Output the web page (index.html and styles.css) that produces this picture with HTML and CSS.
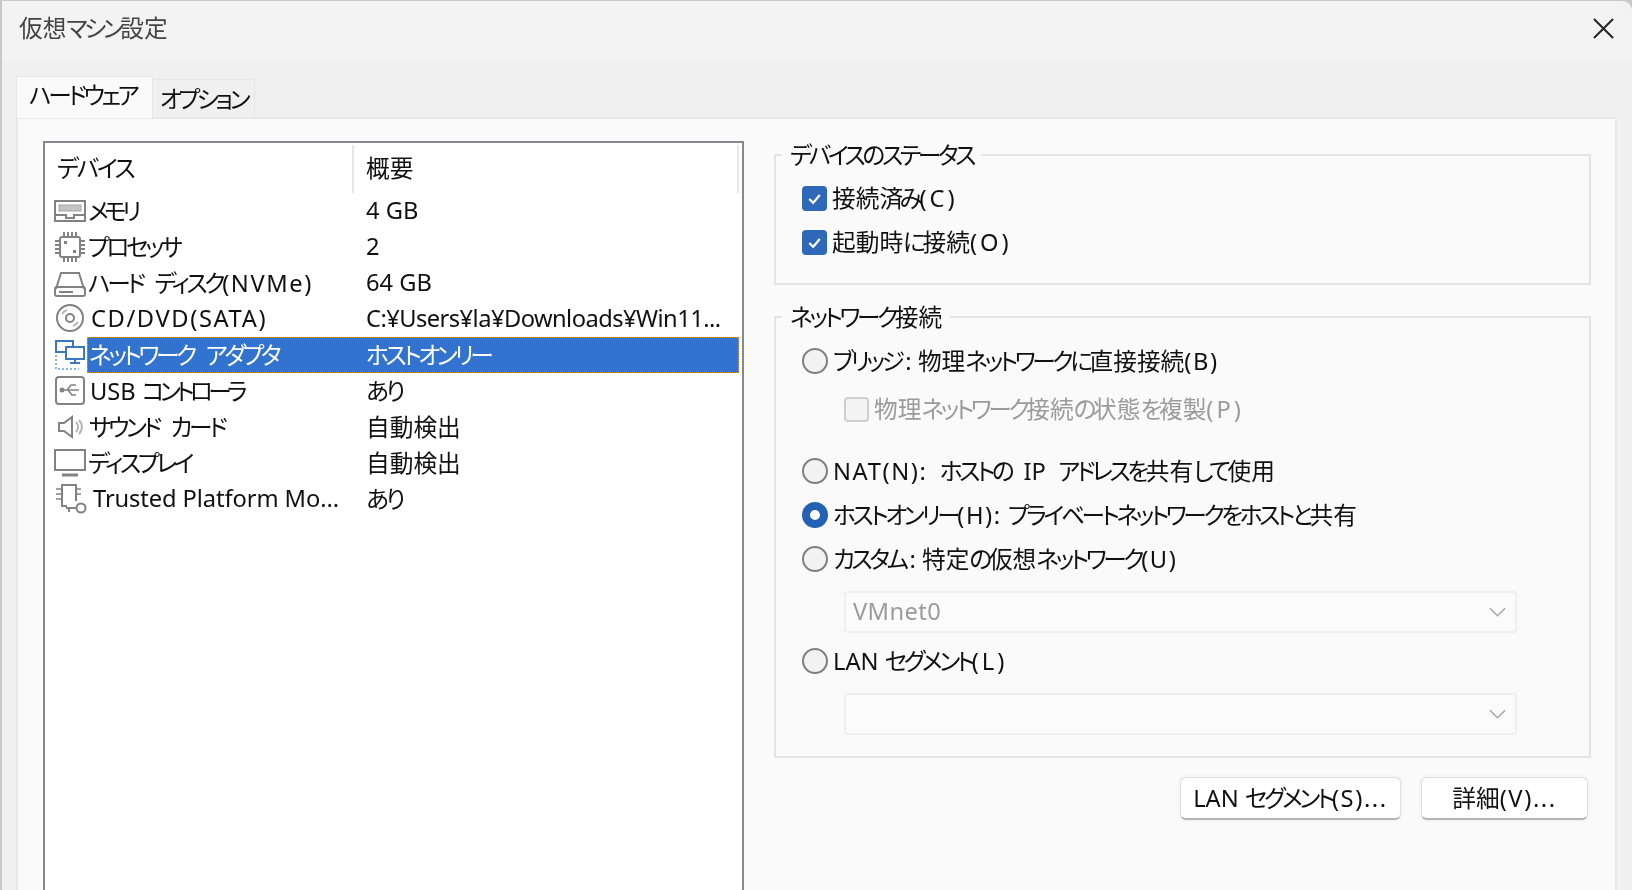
FILE: index.html
```html
<!DOCTYPE html>
<html lang="ja">
<head>
<meta charset="utf-8">
<title>仮想マシン設定</title>
<link rel="stylesheet" href="styles.css">
</head>
<body>
<div class="dialog">
  <header class="titlebar">
    <span class="title">仮想<span class="k">マシン</span>設定</span>
    <svg class="close" viewBox="0 0 22 22"><path d="M1 1L21 21M21 1L1 21"/></svg>
  </header>
  <nav class="tabs">
    <div class="tab active"><span class="k">ハードウェア</span></div>
    <div class="tab"><span class="k">オプション</span></div>
  </nav>
  <main class="panel">
    <section class="list">
      <div class="list-head">
        <div class="head-name"><span class="k2">デバイス</span></div>
        <div class="head-val">概要</div>
      </div>
      <div class="row">
        <svg class="icon" viewBox="0 0 34 34"><rect x="2" y="7" width="30" height="20" fill="none"/><rect class="soft" x="6" y="11" width="22" height="6"/><path d="M2 21H13V24H21V21H32"/></svg>
        <div class="cells"><span class="name tight"><span class="k4">メモリ</span></span><span class="val">4 GB</span></div>
      </div>
      <div class="row">
        <svg class="icon" viewBox="0 0 34 34"><rect x="7" y="7" width="20" height="20" rx="2"/><path d="M11 2V6M15 2V6M19 2V6M23 2V6M11 28V32M15 28V32M19 28V32M23 28V32M2 11H6M2 15H6M2 19H6M2 23H6M28 11H32M28 15H32M28 19H32M28 23H32"/><rect class="dot" x="11" y="11" width="3" height="3"/><rect class="dot" x="20" y="20" width="3" height="3"/></svg>
        <div class="cells"><span class="name tight"><span class="k">プロセッサ</span></span><span class="val">2</span></div>
      </div>
      <div class="row">
        <svg class="icon" viewBox="0 0 34 34"><path d="M3 23L8 7H26L31 23"/><rect x="2" y="21" width="30" height="9" rx="2"/><path d="M6 26H20"/></svg>
        <div class="cells"><span class="name tight"><span class="k">ハード ディスク</span><span class="m">(NVMe)</span></span><span class="val">64 GB</span></div>
      </div>
      <div class="row">
        <svg class="icon" viewBox="0 0 34 34"><circle cx="17" cy="16" r="13"/><circle cx="17" cy="16" r="4"/><path class="soft-line" d="M9 12A9 9 0 0 1 14 8M25 20A9 9 0 0 1 20 24"/></svg>
        <div class="cells cd"><span class="name"><span class="m">CD/DVD(SATA)</span></span><span class="val path">C:¥Users¥la¥Downloads¥Win11...</span></div>
      </div>
      <div class="row">
        <svg class="icon net" viewBox="0 0 34 34"><rect x="3" y="3" width="17" height="11"/><rect class="fill" x="13" y="9" width="18" height="12"/><path d="M22 21V25M17 25H27"/><path class="dots" d="M3 17V31H26"/></svg>
        <div class="cells selected"><span class="name"><span class="k">ネットワーク アダプタ</span></span><span class="val"><span class="k">ホストオンリー</span></span></div>
      </div>
      <div class="row">
        <svg class="icon" viewBox="0 0 34 34"><rect x="3" y="3" width="28" height="27" rx="3"/><path class="thin" d="M9 16H26M14 16L18 11H23M15 16L19 21H23"/><circle class="dot" cx="9" cy="16" r="2.5"/></svg>
        <div class="cells"><span class="name usb">USB <span class="k4">コントローラ</span></span><span class="val"><span class="k">あり</span></span></div>
      </div>
      <div class="row">
        <svg class="icon" viewBox="0 0 34 34"><path d="M6 13H11L19 7V27L11 21H6Z"/><path class="soft-line" d="M23 12A7 7 0 0 1 23 22M26 10A10 10 0 0 1 26 24"/></svg>
        <div class="cells"><span class="name"><span class="k">サウンド カード</span></span><span class="val">自動検出</span></div>
      </div>
      <div class="row">
        <svg class="icon" viewBox="0 0 34 34"><rect x="2" y="4" width="30" height="20"/><path d="M9 29H25" stroke-width="3"/></svg>
        <div class="cells"><span class="name tight"><span class="k">ディスプレイ</span></span><span class="val">自動検出</span></div>
      </div>
      <div class="row">
        <svg class="icon" viewBox="0 0 34 34"><path d="M23 19V3H9V24H14"/><path class="thin" d="M3 7H8M3 12H8M3 17H8M24 7H28M24 12H28"/><circle cx="28" cy="26" r="4.5"/><path d="M13 26H23M16 26V30"/></svg>
        <div class="cells tpm"><span class="name">Trusted Platform Mo...</span><span class="val"><span class="k">あり</span></span></div>
      </div>
    </section>

    <section class="side">
      <fieldset class="group status">
        <legend><span class="k">デバイスのステータス</span></legend>
        <label class="opt"><span class="check on"><svg viewBox="0 0 24 24"><path d="M6 12.5L10.5 17L18 8"/></svg></span><span class="t">接続<span class="k">済み</span><span class="mw">(C)</span></span></label>
        <label class="opt"><span class="check on"><svg viewBox="0 0 24 24"><path d="M6 12.5L10.5 17L18 8"/></svg></span><span class="t">起動時<span class="k">に</span>接続<span class="mw">(O)</span></span></label>
      </fieldset>

      <fieldset class="group network">
        <legend><span class="k">ネットワーク</span>接続</legend>
        <label class="opt"><span class="radio"></span><span class="t"><span class="k">ブリッジ</span><span class="co">:</span> 物理<span class="k">ネットワークに</span>直接接続<span class="m">(B)</span></span></label>
        <label class="opt sub disabled"><span class="check"></span><span class="t">物理<span class="k">ネットワーク</span>接続<span class="k">の</span>状態<span class="k">を</span>複製<span class="mw">(P)</span></span></label>
        <label class="opt nat"><span class="radio"></span><span class="t"><span class="m">NAT(N):</span> <span class="k">ホストの</span> IP <span class="k">アドレスを</span>共有<span class="k">して</span>使用</span></label>
        <label class="opt"><span class="radio on"></span><span class="t"><span class="k">ホストオンリー</span><span class="m">(H):</span> <span class="k">プライベートネットワークをホストと</span>共有</span></label>
        <label class="opt"><span class="radio"></span><span class="t"><span class="k">カスタム</span><span class="co">:</span> 特定<span class="k">の</span>仮想<span class="k">ネットワーク</span><span class="m">(U)</span></span></label>
        <div class="combo first"><span class="cv">VMnet0</span><svg viewBox="0 0 18 10"><path d="M1 1L9 9L17 1"/></svg></div>
        <label class="opt lan"><span class="radio"></span><span class="t">LAN <span class="k">セグメント</span><span class="mw">(L)</span></span></label>
        <div class="combo second"><span></span><svg viewBox="0 0 18 10"><path d="M1 1L9 9L17 1"/></svg></div>
      </fieldset>

      <div class="actions">
        <button class="btn seg"><span class="t">LAN <span class="k">セグメント</span><span class="m">(S)...</span></span></button>
        <button class="btn adv"><span class="t">詳細<span class="m">(V)...</span></span></button>
      </div>
    </section>
  </main>
</div>
</body>
</html>
```
FILE: styles.css
```css
* { box-sizing: border-box; }
html, body { margin: 0; height: 100%; overflow: hidden; }
body {
  background: #c9c9c9;
  font-family: "Noto Sans", "Noto Sans CJK JP", sans-serif;
  font-size: 23.7px;
  font-feature-settings: "palt";
  color: #111;
}
.k { letter-spacing: -3.4px; word-spacing: 9px; }
.k2 { letter-spacing: -2.4px; }
.k4 { letter-spacing: -4.6px; }
.m { letter-spacing: 1.6px; }
.mw { letter-spacing: 3px; }
.co { margin-left: 4px; }
.path { letter-spacing: -0.55px; }
.t { display: inline-block; margin-top: -3px; white-space: nowrap; }
.dialog {
  height: 889px;
  margin: 1px 0 0 2px;
  background: #f0f0f0;
  border-top-right-radius: 10px;
  display: flex;
  flex-direction: column;
  overflow: hidden;
  filter: blur(0.35px);
}
.titlebar {
  height: 60px;
  flex: none;
  background: #f3f3f3;
  display: flex;
  align-items: center;
  justify-content: space-between;
  padding: 0 18px 4px 17px;
}
.title { color: #444; line-height: 1; }
.close { width: 21px; height: 21px; fill: none; stroke: #222; stroke-width: 2; margin-top: -1px; }
.tabs { height: 56px; flex: none; display: flex; align-items: flex-end; padding-left: 14px; }
.tab {
  height: 38px;
  width: 102px;
  padding-left: 7px;
  line-height: 38px;
  white-space: nowrap;
  background: #f0f0f0;
  border: 1px solid #e6e6e6;
  border-bottom: 0;
  border-left: 0;
}
.tab.active {
  height: 42px;
  width: 137px;
  padding-left: 12px;
  background: #fafafa;
  border-left: 1px solid #e6e6e6;
  line-height: 36px;
  position: relative;
  margin-bottom: -1px;
  z-index: 1;
}
.panel {
  flex: 1;
  min-height: 0;
  margin: 0 15px 0 14px;
  background: #fafafa;
  border: 2px solid #e8e8e8;
  border-bottom: 0;
  padding: 22px 0 0 25px;
  display: flex;
  gap: 30px;
}
.list {
  flex: none;
  width: 701px;
  background: #fff;
  border: 2px solid #868a90;
  border-bottom: 0;
}
.list-head { height: 50px; display: flex; align-items: center; padding: 2px 3px 0 0; }
.head-name { width: 309px; height: 100%; padding-left: 12px; line-height: 46px; border-right: 2px solid #e8e8e8; }
.head-val { flex: 1; height: 100%; padding-left: 12px; line-height: 46px; border-right: 2px solid #e8e8e8; }
.row { height: 36px; display: flex; align-items: center; }
.icon {
  flex: none;
  width: 34px;
  height: 34px;
  margin-left: 8px;
  fill: none;
  stroke: #828282;
  stroke-width: 2;
}
.icon .soft { fill: #c4c4c4; stroke: #a5a5a5; stroke-width: 1; }
.icon .dot { fill: #828282; stroke: none; }
.icon .soft-line { stroke: #b5b5b5; }
.icon .thin { stroke-width: 1.5; }
.icon.net { stroke: #3a78c0; }
.net .fill { fill: #fff; }
.net .dots { stroke: #8db4e0; stroke-dasharray: 2 2; }
.cells {
  flex: 1;
  height: 36px;
  margin-right: 3px;
  padding-bottom: 2px;
  display: flex;
  align-items: center;
  border: 1px solid transparent;
  white-space: nowrap;
}
.name { width: 278px; padding-left: 1px; flex: none; }
.tight { padding-left: 0; }
.val { flex: 1; }
.cd .name { padding-left: 3px; }
.usb { padding-left: 2px; }
.tpm .name { padding-left: 5px; letter-spacing: -0.1px; }
.selected { background: #3273cf; color: #fff; border: 1px dotted #e39a3c; }

.side { flex: none; width: 817px; }
.group {
  margin: 0;
  padding: 0;
  min-width: 0;
  border: 2px solid #e4e4e4;
}
.group legend {
  margin-left: 6px;
  padding: 0 8px;
  line-height: 28px;
  height: 28px;
}
.status { height: 144px; padding-top: 7px; margin-bottom: 18px; }
.network { height: 455px; padding-top: 8px; }
.opt {
  height: 44px;
  display: flex;
  align-items: center;
  gap: 5px;
  padding-left: 26px;
  white-space: nowrap;
}
.check {
  flex: none;
  width: 25px;
  height: 25px;
  border-radius: 4px;
  background: #f4f4f4;
  border: 2px solid #cfcfcf;
}
.check.on { background: #2d68b9; border-color: #2d68b9; }
.check svg { display: block; width: 21px; height: 21px; fill: none; stroke: #fff; stroke-width: 2.6; }
.radio {
  flex: none;
  width: 26px;
  height: 26px;
  border-radius: 50%;
  background: #f2f2f2;
  border: 2px solid #7f7f7f;
}
.radio.on { background: #fff; border: 8px solid #2361b4; }
.sub { margin-top: 4px; padding-left: 68px; }
.disabled { color: #9b9b9b; }
.nat { margin-top: 18px; }
.nat .t { word-spacing: 6px; }
.lan { margin-top: 6px; }
.combo {
  margin-left: 68px;
  width: 673px;
  background: #fbfbfb;
  border: 2px solid #efefef;
  border-radius: 3px;
  display: flex;
  align-items: center;
  justify-content: space-between;
  padding: 0 9px 0 7px;
  color: #9b9b9b;
}
.combo svg { width: 17px; height: 10px; fill: none; stroke: #a8a8a8; stroke-width: 1.6; }
.cv { letter-spacing: 0.4px; margin-top: -2px; }
.first { height: 42px; margin-top: 10px; }
.second { height: 42px; margin-top: 10px; }
.actions { display: flex; justify-content: flex-end; gap: 20px; margin: 19px 3px 0 0; }
.btn {
  height: 43px;
  font: inherit;
  font-feature-settings: inherit;
  color: #111;
  background: #fff;
  border: 1px solid #dedede;
  border-bottom: 2px solid #b5b5b5;
  border-radius: 6px;
  box-shadow: 0 0 0 2px #f5f5f5;
  padding: 0;
}
.seg { width: 221px; }
.adv { width: 167px; }
```
